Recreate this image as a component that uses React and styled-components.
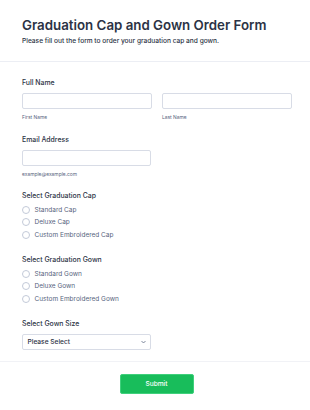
import React from 'react';
import styled, { createGlobalStyle } from 'styled-components';

const GlobalStyle = createGlobalStyle`
  html, body {
    margin: 0;
    padding: 0;
    background: #ffffff;
  }
  body {
    font-family: Inter, "Noto Sans", sans-serif;
    color: #2c3345;
  }
`;

const Page = styled.div`
  width: 310px;
  height: 410px;
  overflow: hidden;
  background: #fff;
`;

const Header = styled.div`
  padding: 17px 22px 15px;
  border-bottom: 1px solid #eceef4;
`;

const Title = styled.h1`
  margin: 0;
  font-size: 13.3px;
  line-height: 16px;
  font-weight: 600;
  color: #2c3345;
`;

const Subtitle = styled.p`
  margin: 4px 0 0;
  font-size: 6.6px;
  line-height: 9px;
  font-weight: 500;
  color: #2c3345;
`;

const Body = styled.div`
  padding: 16px 22px 0;
`;

const Field = styled.div`
  margin-bottom: ${({ gap }) => gap}px;
`;

const Label = styled.div`
  font-size: 6.9px;
  line-height: 10px;
  font-weight: 500;
  color: #2c3345;
  margin-bottom: ${({ mb }) => mb ?? 5}px;
`;

const Row = styled.div`
  display: grid;
  grid-template-columns: 130px 130px;
  gap: 10px;
`;

const Input = styled.div`
  box-sizing: border-box;
  width: ${({ w }) => w || 130}px;
  height: 16px;
  border: 1px solid #d8dce6;
  border-radius: 2px;
  background: #fff;
`;

const SubLabel = styled.div`
  margin-top: 5px;
  font-size: 4.9px;
  line-height: 7px;
  color: #57647e;
`;

const RadioRow = styled.label`
  display: flex;
  align-items: center;
  gap: 4.5px;
  height: 12.5px;
  font-size: 6.5px;
  color: #57647e;
`;

const Circle = styled.span`
  box-sizing: border-box;
  width: 8px;
  height: 8px;
  border-radius: 50%;
  border: 1px solid #c3cad8;
  background: #fff;
`;

const Select = styled.div`
  box-sizing: border-box;
  width: 129px;
  height: 16px;
  border: 1px solid #d8dce6;
  border-radius: 2px;
  display: flex;
  align-items: center;
  justify-content: space-between;
  padding: 0 4px 0 4.5px;
  font-size: 6.6px;
  font-weight: 500;
  color: #2c3345;
`;

const Footer = styled.div`
  margin-top: 11px;
  border-top: 1px solid #f1f2f6;
  padding-top: 12px;
  display: flex;
  justify-content: center;
`;

const SubmitButton = styled.button`
  box-sizing: border-box;
  width: 74px;
  height: 20px;
  margin-left: 3px;
  background: #18bd5b;
  border: 1px solid #3fd07c;
  border-radius: 2px;
  color: #fff;
  font-family: Inter, sans-serif;
  font-size: 6.6px;
  font-weight: 500;
  padding: 0;
`;

const Chevron = () => (
  <svg width="5" height="4" viewBox="0 0 10 6">
    <path d="M1 1l4 4 4-4" fill="none" stroke="#57647e" strokeWidth="1.5" />
  </svg>
);

const RadioGroup = ({ options }) => (
  <div>
    {options.map((o) => (
      <RadioRow key={o}>
        <Circle />
        {o}
      </RadioRow>
    ))}
  </div>
);

export default function App() {
  return (
    <Page>
      <GlobalStyle />
      <Header>
        <Title>Graduation Cap and Gown Order Form</Title>
        <Subtitle>Please fill out the form to order your graduation cap and gown.</Subtitle>
      </Header>
      <Body>
        <Field gap={14}>
          <Label>Full Name</Label>
          <Row>
            <div>
              <Input />
              <SubLabel>First Name</SubLabel>
            </div>
            <div>
              <Input />
              <SubLabel>Last Name</SubLabel>
            </div>
          </Row>
        </Field>
        <Field gap={13.5}>
          <Label mb={4.5}>Email Address</Label>
          <Input w={129} />
          <SubLabel>example@example.com</SubLabel>
        </Field>
        <Field gap={14}>
          <Label mb={2.5}>Select Graduation Cap</Label>
          <RadioGroup options={['Standard Cap', 'Deluxe Cap', 'Custom Embroidered Cap']} />
        </Field>
        <Field gap={14}>
          <Label mb={2.5}>Select Graduation Gown</Label>
          <RadioGroup options={['Standard Gown', 'Deluxe Gown', 'Custom Embroidered Gown']} />
        </Field>
        <Field gap={0}>
          <Label mb={4.5}>Select Gown Size</Label>
          <Select>
            Please Select
            <Chevron />
          </Select>
        </Field>
      </Body>
      <Footer>
        <SubmitButton>Submit</SubmitButton>
      </Footer>
    </Page>
  );
}
